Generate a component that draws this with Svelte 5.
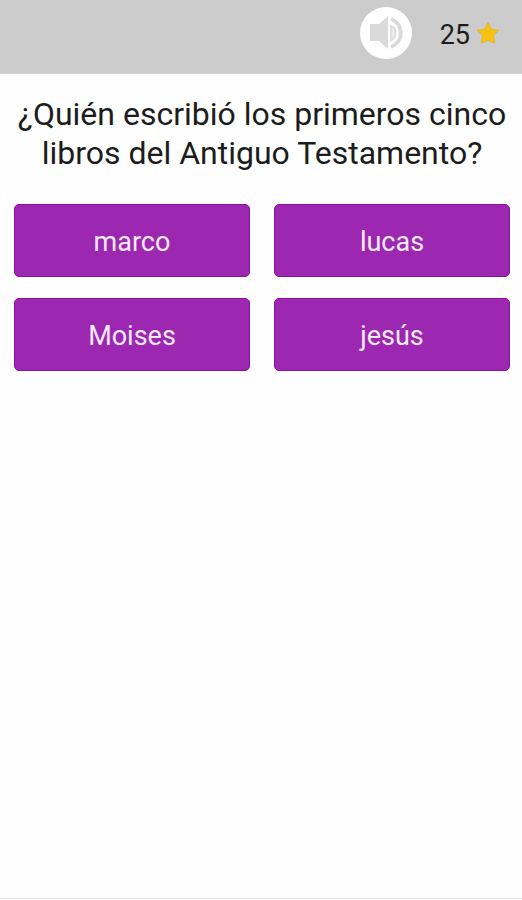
<script lang="ts">
  const question = '¿Quién escribió los primeros cinco libros del Antiguo Testamento?';
  const options = ['marco', 'lucas', 'Moises', 'jesús'];
  const points = 25;

  let muted = $state(false);
  let chosen = $state<number | null>(null);

  function choose(i: number) {
    chosen = i;
  }
</script>

<div class="screen">
  <header class="topbar">
    <button
      class="sound"
      aria-label="Sonido"
      aria-pressed={!muted}
      onclick={() => (muted = !muted)}
    >
      <svg viewBox="0 0 52 52" aria-hidden="true">
        <circle cx="26" cy="26" r="26" fill="#fff" />
        <path d="M10 17h9l9-8v33l-9-8h-9z" fill="#dadada" />
        {#if !muted}
          <path
            d="M31 19c6 2 6 12 0 14z"
            fill="#ececec"
            stroke="#dedede"
            stroke-width="2"
          />
          <path
            d="M31 12c13 5 13 23 0 28"
            fill="none"
            stroke="#dadada"
            stroke-width="4"
          />
        {/if}
      </svg>
    </button>

    <div class="points">
      <span>{points}</span>
      <svg class="star" viewBox="0 0 24 24" aria-hidden="true">
        <path
          d="M12 1.500l3.200 6.900 7.600.9-5.600 5.200 1.500 7.500L12 19.300 5.300 22l1.500-7.500L1.200 9.300l7.600-.9z"
          fill="#f6c40e"
          stroke="#f0b21c"
          stroke-width="1"
          stroke-linejoin="round"
        />
      </svg>
    </div>
  </header>

  <main class="quiz">
    <h1>{question}</h1>

    <div class="options">
      {#each options as opt, i}
        <button class="opt" aria-pressed={chosen === i} onclick={() => choose(i)}>{opt}</button>
      {/each}
    </div>
  </main>

  <footer class="bottom"></footer>
</div>

<style>
  :global(body) {
    background: #fefefe;
  }
  .screen {
    display: flex;
    flex-direction: column;
    min-height: 100vh;
    color: #1c1c1c;
    font-family: Roboto, sans-serif;
  }

  .topbar {
    display: flex;
    align-items: center;
    justify-content: flex-end;
    gap: 28px;
    padding: 7px 22px 14px;
    background: #ccc;
    border-bottom: 1px solid #d6d6d6;
  }
  .sound {
    width: 52px;
    height: 52px;
    padding: 0;
    border: 0;
    border-radius: 50%;
    background: none;
    cursor: pointer;
  }
  .sound svg {
    display: block;
    width: 100%;
    height: 100%;
  }
  .points {
    display: flex;
    align-items: center;
    gap: 6px;
    font-size: 27px;
    line-height: 32px;
  }
  .points span {
    padding-top: 4px;
  }
  .star {
    width: 24px;
    height: 24px;
  }

  .quiz {
    flex: 1;
    padding: 21px 12px 21px 14px;
  }
  h1 {
    margin: 0;
    font-size: 32px;
    font-weight: 400;
    line-height: 39px;
    text-align: center;
  }
  .options {
    display: grid;
    grid-template-columns: 1fr 1fr;
    gap: 21px 24px;
    margin-top: 31px;
  }
  .opt {
    height: 73px;
    padding: 3px 12px 0;
    border: 1px solid #8f0fa6;
    border-radius: 5px;
    background: #9c27b0;
    color: #fbeafd;
    font-family: inherit;
    font-size: 27px;
    cursor: pointer;
  }

  .bottom {
    height: 1px;
    border-top: 1px solid #e4e4e4;
  }
</style>
